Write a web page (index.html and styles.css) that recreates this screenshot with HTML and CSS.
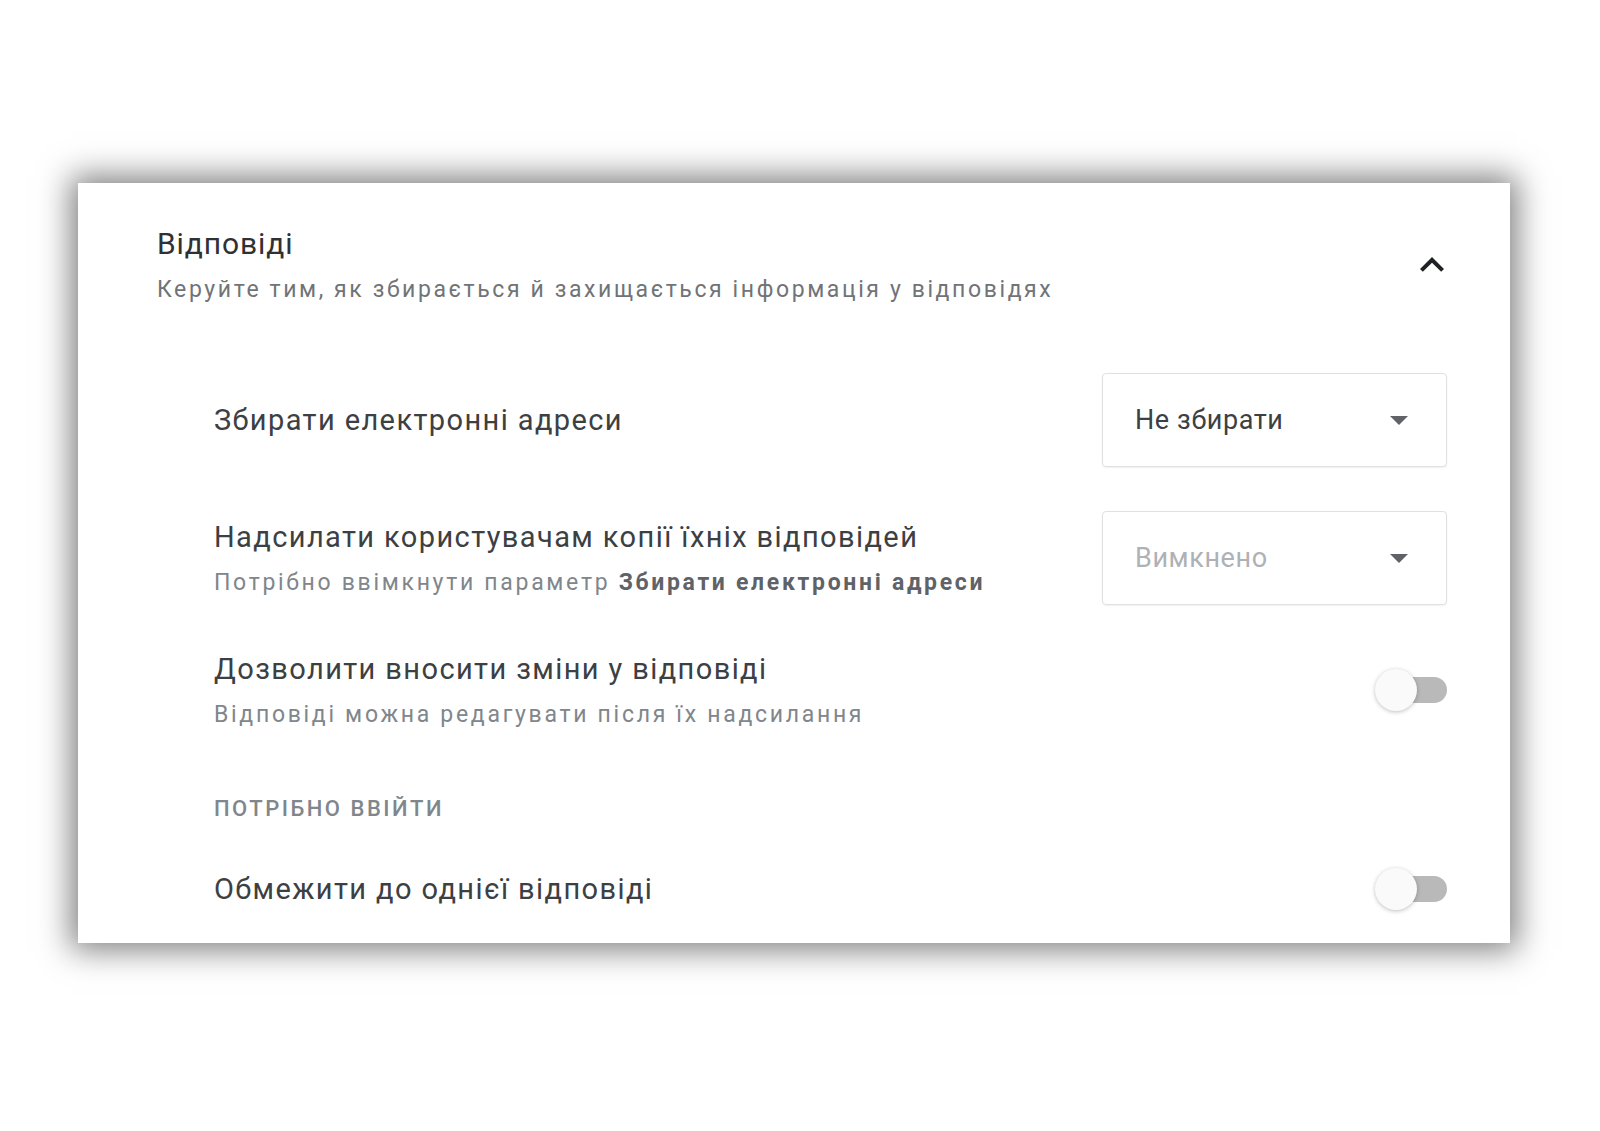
FILE: index.html
```html
<!DOCTYPE html>
<html lang="uk">
<head>
<meta charset="utf-8">
<title>Відповіді</title>
<link rel="stylesheet" href="styles.css">
</head>
<body>
<div class="page">
  <section class="card">
    <header class="card-header">
      <div class="titles">
        <h1 class="title">Відповіді</h1>
        <p class="subtitle">Керуйте тим, як збирається й захищається інформація у відповідях</p>
      </div>
      <svg class="chevron" width="48" height="48" viewBox="0 0 24 24" aria-hidden="true">
        <path d="M12 8l-6 6 1.41 1.41L12 10.83l4.59 4.58L18 14z" fill="#202124"/>
      </svg>
    </header>

    <div class="rows">
      <div class="row">
        <div class="text">
          <div class="label">Збирати електронні адреси</div>
        </div>
        <div class="select">
          <span class="select-value">Не збирати</span>
          <span class="caret"></span>
        </div>
      </div>

      <div class="row">
        <div class="text">
          <div class="label">Надсилати користувачам копії їхніх відповідей</div>
          <div class="sub">Потрібно ввімкнути параметр <b>Збирати електронні адреси</b></div>
        </div>
        <div class="select disabled">
          <span class="select-value">Вимкнено</span>
          <span class="caret"></span>
        </div>
      </div>

      <div class="row">
        <div class="text">
          <div class="label">Дозволити вносити зміни у відповіді</div>
          <div class="sub">Відповіді можна редагувати після їх надсилання</div>
        </div>
        <div class="toggle"><span class="track"></span><span class="knob"></span></div>
      </div>

      <div class="section-title">Потрібно ввійти</div>

      <div class="row">
        <div class="text">
          <div class="label">Обмежити до однієї відповіді</div>
        </div>
        <div class="toggle"><span class="track"></span><span class="knob"></span></div>
      </div>
    </div>
  </section>
</div>
</body>
</html>
```

FILE: styles.css
```css
* { box-sizing: border-box; }

html, body {
  margin: 0;
  padding: 0;
  background: #ffffff;
}

body {
  font-family: Roboto, "Noto Sans", "Liberation Sans", sans-serif;
  color: #3c4043;
}

.page {
  padding: 183px 0 0 78px;
  height: 1131px;
}

.card {
  width: 1432px;
  height: 760px;
  background: #ffffff;
  box-shadow: 0 0 30px 7px rgba(0, 0, 0, 0.5);
  padding: 41px 54px 0 79px;
}

.card-header {
  display: flex;
  align-items: center;
  justify-content: space-between;
}

.title {
  margin: 0;
  font-size: 30px;
  line-height: 40px;
  font-weight: 400;
  letter-spacing: 0.9px;
  color: #303134;
}

.subtitle {
  margin: 10px 0 0;
  font-size: 23px;
  line-height: 32px;
  letter-spacing: 2.6px;
  color: #707478;
}

.chevron { display: block; }

.rows {
  padding: 67px 9px 0 57px;
  display: flex;
  flex-direction: column;
  gap: 44px;
}

.row {
  display: flex;
  align-items: center;
  justify-content: space-between;
}

.text {
  display: flex;
  flex-direction: column;
  gap: 10px;
}

.label {
  font-size: 29px;
  line-height: 40px;
  letter-spacing: 1.4px;
  color: #3c4043;
}

.sub {
  font-size: 23px;
  line-height: 32px;
  letter-spacing: 2.7px;
  color: #80868b;
}

.sub b {
  font-weight: 700;
  color: #5f6368;
}

.select {
  width: 345px;
  height: 94px;
  border: 1px solid #e0e0e0;
  border-radius: 4px;
  box-shadow: 0 1px 2px rgba(0, 0, 0, 0.06);
  display: flex;
  align-items: center;
  justify-content: space-between;
  padding: 0 38px 0 32px;
}

.select-value {
  font-size: 27px;
  letter-spacing: 0.6px;
  color: #3c4043;
}

.select.disabled .select-value {
  color: #aeb1b5;
}

.caret {
  width: 0;
  height: 0;
  border-left: 9px solid transparent;
  border-right: 9px solid transparent;
  border-top: 9px solid #5f6368;
}

.toggle {
  position: relative;
  width: 72px;
  height: 42px;
}

.track {
  position: absolute;
  right: 0;
  top: 8px;
  width: 66px;
  height: 26px;
  border-radius: 13px;
  background: #b9b9b9;
}

.knob {
  position: absolute;
  left: 0;
  top: 0;
  width: 42px;
  height: 42px;
  border-radius: 50%;
  background: #fafafa;
  box-shadow: 0 1px 4px rgba(0, 0, 0, 0.25);
}

.section-title {
  font-size: 22px;
  line-height: 30px;
  font-weight: 500;
  text-transform: uppercase;
  letter-spacing: 2.5px;
  color: #80868b;
  margin: 19px 0 0;
}
```
